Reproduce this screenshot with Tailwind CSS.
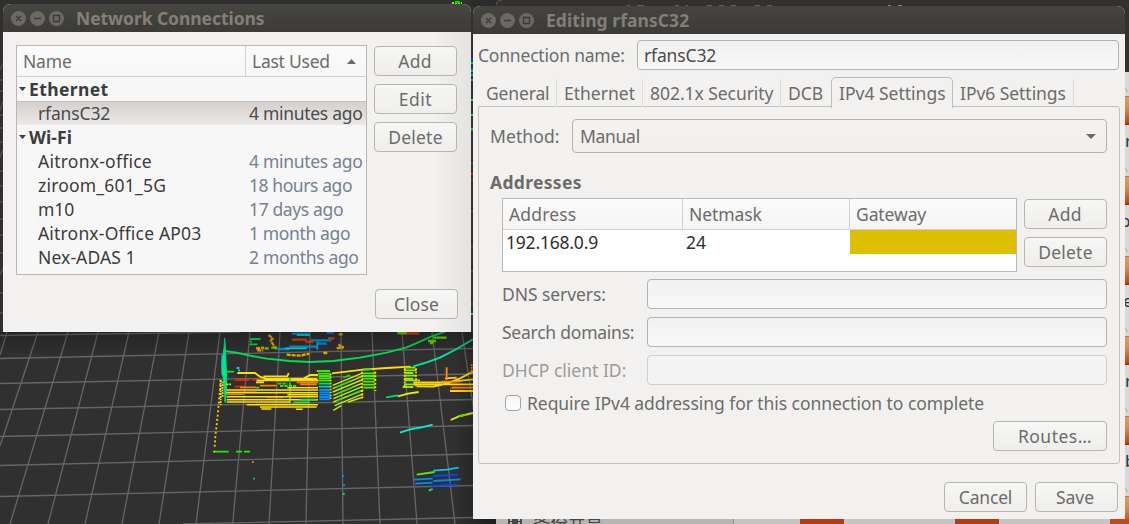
<!DOCTYPE html>
<html lang="en">
<head>
<meta charset="utf-8">
<title>Network Connections</title>
<script src="https://cdn.jsdelivr.net/npm/@tailwindcss/browser@4"></script>
</head>
<body>
<div class="relative h-[524px] w-[1129px] overflow-hidden bg-[#303030] font-['Noto_Sans','Noto_Sans_CJK_SC',sans-serif] text-[17.5px] leading-[24px] whitespace-nowrap text-[#6c6c6a]">

  <!-- Point cloud view -->
  <svg class="absolute inset-0" width="1129" height="524" viewBox="0 0 1129 524" fill="none">
    <g stroke="#666666" stroke-width="1.3">
      <path d="M7 332L0 355M38 332L0 446M68 332L10 524M98 332L48 524M129 332L85 524M159 332L122 524M189 332L159 524M220 332L196 524M250 332L232.700 524M280 332L269 524M310 332L306 524M341 332L343 524M372 332L380 524M402 332L417 524M432 332L455 524M462 332L474 412"/>
      <path d="M0 335.500L240 332M0 358.500L473 348.500M0 383.500L473 374M0 409.500L473 399.500M0 436.500L473 425.500M0 465.500L473 454M0 496.500L473 485.500M183 524L473 517.500"/>
      <path d="M0 70L3 63M0 80H3M0 91H3M0 110L3 102M0 115H3M0 128H3M0 142H3M0 157L3 150M0 171H3M0 186H3M0 202H3M0 219H3M0 235H3M0 253H3M0 275L3 268M0 293H3M0 313H3M471 75H474M471 100H474M471 130H474M471 163H474M471 180H474M471 211H474M471 246H474M471 271H474M471 304H474" stroke="#505050"/>
    </g>
    <g stroke-width="2">
      <path d="M471 59H474M471 69H474" stroke="#0048e0"/>
      <path d="M471 63H474M471 71H474M471 129H474" stroke="#00d020"/>
      <path d="M471 75H474M471 80H474" stroke="#0090e8"/>
      <path d="M471 100H474M471 115H474M471 314H474" stroke="#00d890"/>
      <path d="M471 174H474" stroke="#e02000"/>
      <path d="M452 3H462" stroke="#9fe000" stroke-dasharray="2 1"/><path d="M455 2H460" stroke="#00d800"/>
    </g>
    <g transform="translate(200 325) scale(.33333)" stroke-width="5.500">
      <path d="M75 78L115 84L150 92L200 101L270 108L330 111L400 108L480 98L560 83L620 67L660 50L700 32L735 20" stroke="#00e050"/>
      <path d="M640 124L680 112L720 98L770 72L819 43" stroke="#00e8a8"/>
      <path d="M74 40L72 70L66 110L66 140L70 160L74 200L75 232L80 200L80 160L78 110L76 60Z" fill="#00e888" stroke="#00e080" stroke-width="3"/>
      <path d="M66 90V150M72 75V120" stroke="#00dcc0" stroke-width="3"/>
      <path d="M78 140H102M150 42H182M150 50H156M148 58H172" stroke="#00e040"/>
      <path d="M62 165L58 215L54 262L50 300L46 335L44 368" stroke="#f8c800" stroke-dasharray="6 7"/>
      <path d="M62 165V240M68 170V216M80 178H94" stroke="#ffe800" stroke-dasharray="5 3"/>
      <path d="M44 380H86M108 380H126M132 380H150" stroke="#10f010"/><path d="M40 380H45" stroke="#ffe800"/>
      <path d="M106 165H148M156 164H176M104 185H130" stroke="#f02000"/>
      <path d="M112 144H165L180 155L200 162H352M190 154H262L266 144M312 160L330 150H354M170 166H354M168 172H192" stroke="#ffe000"/>
      <path d="M110 129H118M114 136H120" stroke="#00d8e8"/>
      <path d="M120 187H168M180 182H230M290 172H354M300 178H350" stroke="#ff8000"/>
      <path d="M234 176H262M240 183H290M168 188H180M270 160V238" stroke="#30e000" stroke-dasharray="10 3"/>
      <path d="M80 195H354M80 203H354M80 215H354M80 224H354M80 231H270M140 239H354M180 246H350M184 252H214M288 253H308M262 188H354M262 209H354" stroke="#ffe000" stroke-width="4.500"/>
      <path d="M82 198H170M200 218H250M80 208H130" stroke="#f0a000" stroke-width="3"/>
      <path d="M300 224H350M280 232H330" stroke="#20e840"/>
      <path d="M350 138H390M354 146H392M356 153H392M356 160H392M354 167H392" stroke="#40e800"/>
      <path d="M356 176H392M356 185H392" stroke="#00d890"/>
      <path d="M358 195H390M358 202H390M358 209H390M358 216H392M358 223H390" stroke="#008cff"/>
      <path d="M392 146V222" stroke="#c8e800" stroke-dasharray="5 4"/>
      <path d="M396 145L420 142L490 134L560 129L632 125" stroke="#ffe000"/>
      <path d="M398 181L485 145M398 191L485 155M398 201L485 165M400 211L485 175M400 221L487 185M400 231L490 195M404 242L490 206M400 256L424 242M444 231L490 216" stroke="#c4ec00" stroke-width="4.500"/>
      <path d="M408 187L450 168M412 206L460 186M440 214L485 196M430 158L450 150M410 227L430 219" stroke="#20e020" stroke-width="4.500"/>
      <path d="M488 133H516M486 145H526M486 153H526M486 161H526M488 170H524M488 179H524M490 188H524" stroke="#50ec00"/>
      <path d="M526 140V198M486 140V220" stroke="#ffe000" stroke-dasharray="6 5"/>
      <path d="M612 128H646M612 136H650M614 144H640M614 152H648M614 161H640M612 166H660M612 178H650M608 186H640" stroke="#90e800"/>
      <path d="M614 130V190M648 130V184" stroke="#ffe000" stroke-dasharray="5 5"/>
      <path d="M640 172H735L819 163M640 178H736L819 178M650 184L700 185L740 176L780 160L819 140M750 198H819M735 160L770 158" stroke="#ffd800"/>
      <path d="M724 170H780M755 188H819M740 127V165" stroke="#ff8800"/><path d="M750 190H800" stroke="#f04000" stroke-width="3"/>
      <path d="M815 118V150" stroke="#ff8800" stroke-dasharray="5 3"/>
      <path d="M558 217L594 211" stroke="#00e060"/><path d="M594 214L624 206L656 201M752 285L780 273L819 264" stroke="#e8f000"/><path d="M775 274L800 269" stroke="#60e800"/>
      <path d="M600 323L630 313L665 307L698 299" stroke="#00f0e0"/>
      <path d="M650 449L704 441" stroke="#60e800"/>
      <path d="M700 437L740 434L776 428" stroke="#00c8e8"/>
      <path d="M698 453L774 449M694 483L770 479" stroke="#0048ff"/>
      <path d="M642 464L698 461M700 468L782 463M646 476L698 473" stroke="#0088ff"/>
      <path d="M686 497L698 492" stroke="#20e840"/><path d="M156 411H161" stroke="#ff8800"/><path d="M160 461H165M428 507H434" stroke="#00e840"/><path d="M426 453H432M429 480H435" stroke="#0088ff"/>
      <path d="M276 26H330M232 72H268M268 65H350M330 46H395M354 56H380M380 23H402" stroke="#0090e8" stroke-width="7"/>
      <path d="M290 30H330M256 70H320" stroke="#00d8c0"/>
      <path d="M276 44H320M316 50H340M384 40H404M600 25H658" stroke="#e84000" stroke-width="7"/>
      <path d="M168 70L192 68M172 76H190M206 30L218 40L212 48L222 62L230 72M260 89L300 92L328 86M410 70L432 66M416 58L428 72M370 84H382M416 28H430" stroke="#e8a800" stroke-width="7" stroke-dasharray="12 3"/>
      <path d="M592 24H620M700 38H740M684 48H708M690 54H700M194 70H206M214 68H230" stroke="#60d800" stroke-width="7"/>
      <path d="M352 50V74" stroke="#00b0e0"/>
    </g>
  </svg>
  <div class="absolute top-[332px] left-0 h-6 w-[480px] bg-linear-to-b from-black/25 to-transparent"></div>
  <div class="absolute top-[332px] left-[455px] h-[192px] w-[41px] bg-linear-to-r from-transparent to-black/40"></div>

  <!-- File manager behind the editor -->
  <div class="absolute top-0 left-[496px] h-[524px] w-[633px] overflow-hidden rounded-tl-md bg-[#d9d8d6]">
    <div class="h-[72px] bg-[#32312e]"></div>
    <div class="absolute top-[5px] left-[131px] flex h-px w-[275px] gap-[7px] opacity-70"><i class="w-[3px] bg-[#77746e]"></i><i class="w-[7px] bg-[#77746e]"></i><i class="ml-6 w-[4px] bg-[#77746e]"></i><i class="w-[2px] bg-[#77746e]"></i><i class="ml-3 w-[5px] bg-[#77746e]"></i><i class="w-[5px] bg-[#77746e]"></i><i class="w-[5px] bg-[#77746e]"></i><i class="ml-3 w-[5px] bg-[#77746e]"></i><i class="w-[5px] bg-[#77746e]"></i><i class="ml-auto w-[3px] bg-[#aaa59c]"></i><i class="w-[4px] bg-[#aaa59c]"></i></div>
    <svg class="absolute top-0 right-0" width="6" height="524" viewBox="0 0 6 524">
      <defs><linearGradient id="f" x2="0" y2="1"><stop stop-color="#d9a269"/><stop offset=".45" stop-color="#ce8b4d"/><stop offset=".9" stop-color="#bd4a17"/><stop offset="1" stop-color="#a32405"/></linearGradient>
      <g id="folder"><path d="M0-7q4-1 4 3" fill="none" stroke="#aaa"/><path d="M0 0H6V29H0z" fill="url(#f)"/><path d="M0 .5H6" stroke="#dc6c3c"/></g></defs>
      <use href="#folder" y="96"/><use href="#folder" y="176"/><use href="#folder" y="256"/><use href="#folder" y="336"/><use href="#folder" y="416"/><use href="#folder" y="496"/>
    </svg>
    <div class="absolute top-[129px] left-[629px] flex flex-col gap-[56px] text-[17px] text-[#333]"><span>r</span><span class="-ml-[5px]">p</span><span class="-ml-[2px]">e</span><span>r</span><span>b</span></div>
    <div class="absolute bottom-0 left-0 h-[5px] w-full bg-[#c6c5c4]">
      <div class="h-full w-[238px] border-r border-[#8e8e8c] bg-[#b6b5b3]"></div>
      <svg class="absolute top-0 left-3" width="14" height="5" fill="#484848"><path d="M0 0h2v5H0zM12 0h2v5h-2zM4 0h6v5H4zM2 2h2v1H2zM10 2h2v1h-2z"/></svg>
      <span class="absolute -top-[8px] left-[37px] text-[17.500px] text-[#444]">备份共享</span>
      <div class="absolute top-0 left-[304px] h-full w-[44px] bg-[#b83a10]"></div>
      <div class="absolute top-0 left-[459px] h-full w-[44px] bg-[#b83a10]"></div>
      <div class="absolute top-0 left-[614px] h-full w-[20px] bg-[#bf4a18]"></div>
    </div>
  </div>
  <div class="absolute top-0 left-[471px] h-[6px] w-[25px] bg-[#2b2b2b]"></div>

  <!-- Network Connections window -->
  <section class="absolute top-[4px] left-[3px] flex h-[328px] w-[468px] flex-col overflow-hidden rounded-t-lg bg-[#f2f1f0]">
    <header class="flex h-[28px] shrink-0 items-center bg-linear-to-b from-[#474641] to-[#3c3b37] pl-[8px]">
      <svg width="53" height="15" viewBox="0 0 53 15" fill="none" stroke="#3b3a36" stroke-width="1.300"><g fill="#6a6964" stroke="none"><circle cx="7.500" cy="7.500" r="7.500"/><circle cx="26.500" cy="7.500" r="7.500"/><circle cx="45.500" cy="7.500" r="7.500"/></g><path d="M5 5l5 5M10 5l-5 5M23 7.500h7M42.500 4.500h6v6h-6z"/></svg>
      <h1 class="pl-[12px] font-bold tracking-[-0.06px] text-[#827f78]">Network Connections</h1>
    </header>
    <div class="flex flex-1 flex-col bg-linear-to-r from-[#f2f1f0] from-92% to-[#e4e3e1] pt-[13px] pl-[13px]">
      <div class="flex gap-[7px]">
        <div class="h-[230px] w-[351px] overflow-hidden border border-[#bbb8b4] bg-[#f7f7f7] text-[#3c3c3c]">
          <div class="flex h-[31px] border-b border-[#d3d1ce] bg-linear-to-b from-[#fbfbfb] to-[#f7f7f7] text-[#6c6c6a]">
            <div class="flex w-[229px] items-center border-r border-[#d3d1ce] pl-[6px] tracking-[-0.2px]">Name</div>
            <div class="flex flex-1 items-center justify-between pr-[10px] pl-[6px]"><span class="tracking-[-0.25px]">Last Used</span><svg width="9" height="5" fill="#6a6a68"><path d="M0 5L4.500 0L9 5z"/></svg></div>
          </div>
          <div class="flex h-6 items-center gap-[3px] pl-[2px] font-bold tracking-[0.38px]"><svg width="7" height="4" fill="#3c3c3c"><path d="M0 0h7L3.500 4z"/></svg>Ethernet</div>
          <div class="flex h-6 border-t border-[#c4c0bd] bg-linear-to-b from-[#d5d0cd] to-[#ebe9e8] text-[#4c4c4c]"><span class="-mt-px w-[232px] pl-[21px] tracking-[-0.15px]">rfansC32</span><span class="-mt-px tracking-[-0.3px]">4 minutes ago</span></div>
          <div class="flex h-6 items-center gap-[3px] pl-[2px] font-bold tracking-[0.1px]"><svg width="7" height="4" fill="#3c3c3c"><path d="M0 0h7L3.500 4z"/></svg>Wi-Fi</div>
          <div class="flex h-6"><span class="w-[232px] pl-[21px] tracking-[0.24px]">Aitronx-office</span><span class="tracking-[-0.3px] text-[#738294]">4 minutes ago</span></div>
          <div class="flex h-6"><span class="w-[232px] pl-[21px] tracking-[0.2px]">ziroom_601_5G</span><span class="tracking-[-0.42px] text-[#738294]">18 hours ago</span></div>
          <div class="flex h-6"><span class="w-[232px] pl-[21px]">m10</span><span class="tracking-[-0.37px] text-[#738294]">17 days ago</span></div>
          <div class="flex h-6"><span class="w-[232px] pl-[21px] tracking-[0.18px]">Aitronx-Office AP03</span><span class="tracking-[-0.37px] text-[#738294]">1 month ago</span></div>
          <div class="flex h-6"><span class="w-[232px] pl-[21px] tracking-[0.1px]">Nex-ADAS 1</span><span class="tracking-[-0.33px] text-[#738294]">2 months ago</span></div>
        </div>
        <div class="flex flex-col gap-[8px] pt-[1px]">
          <button class="h-[30px] w-[83px] rounded-[4px] border border-[#b7b5b2] bg-linear-to-b from-[#f6f6f5] to-[#efeeed] pr-[1px] tracking-[0.3px]">Add</button>
          <button class="h-[30px] w-[83px] rounded-[4px] border border-[#b7b5b2] bg-linear-to-b from-[#f6f6f5] to-[#efeeed] tracking-[0.5px]">Edit</button>
          <button class="h-[30px] w-[83px] rounded-[4px] border border-[#b7b5b2] bg-linear-to-b from-[#f6f6f5] to-[#efeeed] tracking-[0.2px]">Delete</button>
        </div>
      </div>
      <button class="mt-[14px] mr-[13px] h-[30px] w-[83px] self-end rounded-[4px] border border-[#b7b5b2] bg-linear-to-b from-[#f6f6f5] to-[#efeeed] tracking-[0.1px]">Close</button>
    </div>
  </section>

  <!-- Connection editor window -->
  <section class="absolute top-[6px] left-[473px] flex h-[513px] w-[652px] flex-col overflow-hidden rounded-t-lg bg-[#f2f1f0]">
    <header class="flex h-[28px] shrink-0 items-center bg-linear-to-b from-[#454440] to-[#3c3b37] pl-[8px]">
      <svg width="53" height="15" viewBox="0 0 53 15" fill="none" stroke="#3b3a36" stroke-width="1.300"><g fill="#6a6964" stroke="none"><circle cx="7.500" cy="7.500" r="7.500"/><circle cx="26.500" cy="7.500" r="7.500"/><circle cx="45.500" cy="7.500" r="7.500"/></g><path d="M5 5l5 5M10 5l-5 5M23 7.500h7M42.500 4.500h6v6h-6z"/></svg>
      <h1 class="pl-[12px] font-bold tracking-[0.05px] text-[#827f78]">Editing rfansC32</h1>
    </header>
    <div class="flex h-[42px] items-center pl-[5px]">
      <label class="w-[159px] tracking-[-0.2px]">Connection name:</label>
      <div class="flex h-[30px] w-[482px] items-center rounded-[4px] border border-[#b4b2af] bg-linear-to-b from-[#f0f0f0] to-[#f8f8f8] pl-[6px] tracking-[-0.15px] text-[#4c4c4c]">rfansC32</div>
    </div>
    <nav class="z-10 flex h-[31px] items-end pl-[5px]">
      <div class="flex h-[28px] w-[79px] items-center border-r border-[#dcdbd9] pl-[8px] tracking-[-0.15px]">General</div>
      <div class="flex h-[28px] w-[86px] items-center border-r border-[#dcdbd9] pl-[7px]">Ethernet</div>
      <div class="flex h-[28px] w-[138px] items-center border-r border-[#dcdbd9] pl-[7px] tracking-[-0.05px]">802.1x Security</div>
      <div class="flex h-[28px] w-[50px] items-center pl-[7px]">DCB</div>
      <div class="-mb-px flex h-[31px] w-[122px] items-center rounded-t-[5px] border border-b-0 border-[#bfbdba] bg-[#f2f1f0] pb-px pl-[7px]">IPv4 Settings</div>
      <div class="flex h-[28px] w-[121px] items-center border-r border-[#dcdbd9] pl-[7px] tracking-[-0.05px]">IPv6 Settings</div>
    </nav>
    <div class="-mt-px ml-[5px] flex h-[358px] w-[642px] shrink-0 flex-col rounded-[3px] rounded-tl-none border border-[#c3c1be] pt-[12px] pl-[11px]">
      <div class="flex h-[34px] items-center">
        <label class="w-[82px] tracking-[0.1px]">Method:</label>
        <div class="flex h-[34px] w-[535px] items-center justify-between rounded-[4px] border border-[#b4b2af] bg-linear-to-b from-[#f4f3f2] to-[#f0efee] pr-[10px] pl-[7px] tracking-[-0.3px]">Manual<svg width="10" height="5" fill="#6a6a68"><path d="M0 0h10L5 5z"/></svg></div>
      </div>
      <h2 class="mt-[17px] font-bold tracking-[0.32px]">Addresses</h2>
      <div class="mt-[4px] ml-[12px] flex gap-[7px]">
        <div class="h-[74px] w-[515px] border border-[#bbb8b4] bg-white text-[#2e2e2e]">
          <div class="flex h-[31px] items-stretch border-b border-[#d3d1ce] bg-linear-to-b from-[#fbfbfb] to-[#f4f4f4] text-[#6c6c6a]">
            <div class="flex w-[180px] items-center border-r border-[#d3d1ce] pl-[6px] tracking-[0.15px]">Address</div>
            <div class="flex w-[167px] items-center border-r border-[#d3d1ce] pl-[6px] tracking-[-0.1px]">Netmask</div>
            <div class="flex flex-1 items-center pl-[6px] tracking-[-0.1px]">Gateway</div>
          </div>
          <div class="flex h-6"><span class="w-[183px] pl-[3px] tracking-[-0.2px]">192.168.0.9</span><span class="w-[164px]">24</span><span class="flex-1 bg-[#dcbf00]"></span></div>
        </div>
        <div class="flex flex-col gap-[8px] pt-px">
          <button class="h-[30px] w-[83px] rounded-[4px] border border-[#b7b5b2] bg-linear-to-b from-[#f6f6f5] to-[#efeeed] pr-px tracking-[0.3px]">Add</button>
          <button class="h-[30px] w-[83px] rounded-[4px] border border-[#b7b5b2] bg-linear-to-b from-[#f6f6f5] to-[#efeeed] tracking-[0.2px]">Delete</button>
        </div>
      </div>
      <div class="mt-[7px] ml-[12px] flex flex-col gap-[8px]">
        <div class="flex h-[30px] items-center"><label class="w-[145px] tracking-[-0.08px]">DNS servers:</label><div class="h-[30px] w-[460px] rounded-[4px] border border-[#b4b2af] bg-linear-to-b from-[#f1f1f1] to-[#f8f8f8]"></div></div>
        <div class="flex h-[30px] items-center"><label class="w-[145px] tracking-[-0.24px]">Search domains:</label><div class="h-[30px] w-[460px] rounded-[4px] border border-[#b4b2af] bg-linear-to-b from-[#f1f1f1] to-[#f8f8f8]"></div></div>
        <div class="flex h-[30px] items-center"><label class="w-[145px] text-[#9c9b99]">DHCP client ID:</label><div class="h-[30px] w-[460px] rounded-[4px] border border-[#d0cfcd] bg-[#f3f3f3]"></div></div>
      </div>
      <div class="mt-[6px] ml-[15px] flex h-6 items-center gap-[6px]"><span class="size-[16px] rounded-[4px] border border-[#a5a3a0] bg-linear-to-b from-[#f4f4f4] to-white"></span><span class="tracking-[-0.06px]">Require IPv4 addressing for this connection to complete</span></div>
      <button class="mt-[6px] mr-[12px] h-[30px] w-[114px] self-end rounded-[4px] border border-[#b7b5b2] bg-linear-to-b from-[#f6f6f5] to-[#efeeed] pl-[10px] tracking-[0.5px]">Routes…</button>
    </div>
    <div class="mt-[18px] mr-[7px] flex justify-end gap-[8px]">
      <button class="h-[30px] w-[83px] rounded-[4px] border border-[#b7b5b2] bg-linear-to-b from-[#f6f6f5] to-[#efeeed] tracking-[-0.2px]">Cancel</button>
      <button class="h-[30px] w-[83px] rounded-[4px] border border-[#b7b5b2] bg-linear-to-b from-[#f6f6f5] to-[#efeeed] pr-[3px]">Save</button>
    </div>
  </section>
</div>
</body>
</html>
